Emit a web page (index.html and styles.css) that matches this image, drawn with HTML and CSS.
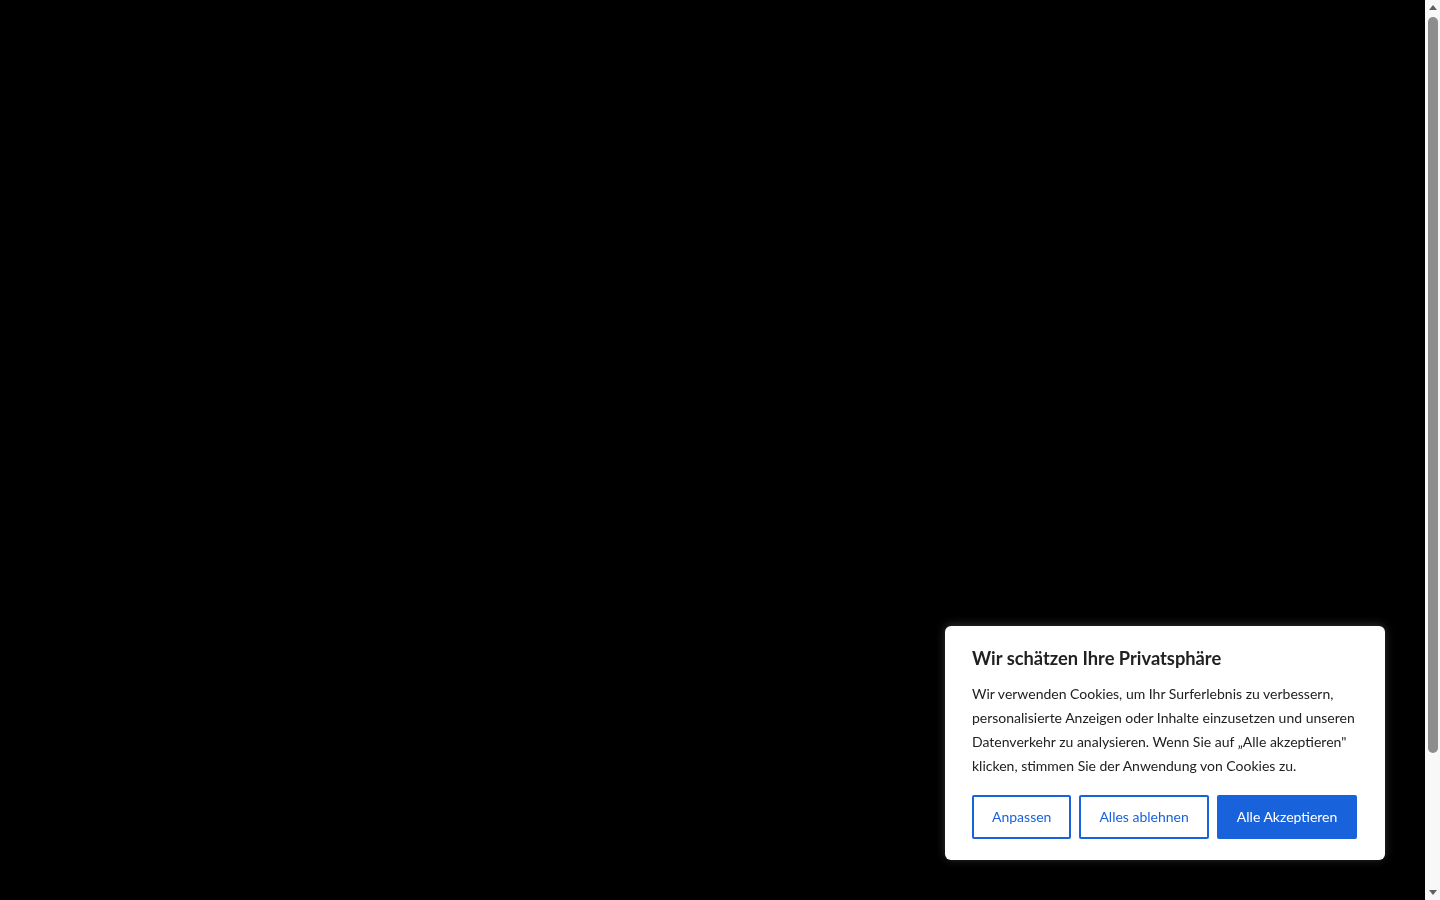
FILE: index.html
```html
<!DOCTYPE html>
<html lang="de">
<head>
<meta charset="utf-8">
<title>Privatsphäre</title>
<link rel="stylesheet" href="styles.css">
</head>
<body>
<main class="page"></main>
<div class="consent" role="dialog" aria-label="Wir schätzen Ihre Privatsphäre">
  <p class="consent-title">Wir schätzen Ihre Privatsphäre</p>
  <p class="consent-notice">Wir verwenden Cookies, um Ihr Surferlebnis zu verbessern, personalisierte Anzeigen oder Inhalte einzusetzen und unseren Datenverkehr zu analysieren. Wenn Sie auf „Alle akzeptieren" klicken, stimmen Sie der Anwendung von Cookies zu.</p>
  <div class="consent-actions">
    <button class="btn btn-outline">Anpassen</button>
    <button class="btn btn-outline">Alles ablehnen</button>
    <button class="btn btn-solid">Alle Akzeptieren</button>
  </div>
</div>
<div class="scrollbar" aria-hidden="true">
  <div class="sb-btn"><span class="arrow-up"></span></div>
  <div class="sb-track"><div class="sb-thumb"></div></div>
  <div class="sb-btn"><span class="arrow-down"></span></div>
</div>
</body>
</html>
```
FILE: styles.css
```css
html, body {
  margin: 0;
  padding: 0;
  background: #000;
  overflow: hidden;
}
.page {
  display: block;
  height: 100vh;
}
.consent {
  position: fixed;
  right: 55px;
  bottom: 40px;
  width: 440px;
  box-sizing: border-box;
  padding: 20px 27px 21px 27px;
  background: #fff;
  border-radius: 6px;
  box-shadow: 0 -1px 10px 0 rgba(172,171,171,0.3);
  font-family: Lato, "Noto Sans", sans-serif;
  color: #212121;
}
.consent-title {
  margin: 0 0 12px 0;
  font-size: 18.3px;
  font-weight: 700;
  line-height: 24px;
}
.consent-notice {
  margin: 0 0 17px 0;
  font-size: 14px;
  line-height: 24px;
}
.consent-actions {
  display: flex;
  gap: 8px;
}
.btn {
  font-family: Lato, "Noto Sans", sans-serif;
  font-size: 14px;
  line-height: 24px;
  font-weight: 400;
  padding: 8px 18px;
  border: 2px solid #1863dc;
  border-radius: 2px;
  cursor: pointer;
}
.btn-outline {
  background: #fff;
  color: #1863dc;
}
.btn-solid {
  background: #1863dc;
  color: #fff;
}

/* window scrollbar */
.scrollbar {
  position: fixed;
  top: 0;
  right: 0;
  width: 15px;
  height: 100vh;
  background: #f8f8f8;
  display: flex;
  flex-direction: column;
}
.sb-btn {
  height: 15px;
  flex: 0 0 15px;
  display: flex;
  align-items: center;
  justify-content: center;
}
.arrow-up {
  width: 0;
  height: 0;
  border-left: 4px solid transparent;
  border-right: 4px solid transparent;
  border-bottom: 5px solid #606060;
}
.arrow-down {
  width: 0;
  height: 0;
  border-left: 4px solid transparent;
  border-right: 4px solid transparent;
  border-top: 5px solid #606060;
}
.sb-track {
  flex: 1;
  padding: 2px 2px 0 3px;
}
.sb-thumb {
  height: 736px;
  background: #8d8d8d;
  border-radius: 5px;
}
```
